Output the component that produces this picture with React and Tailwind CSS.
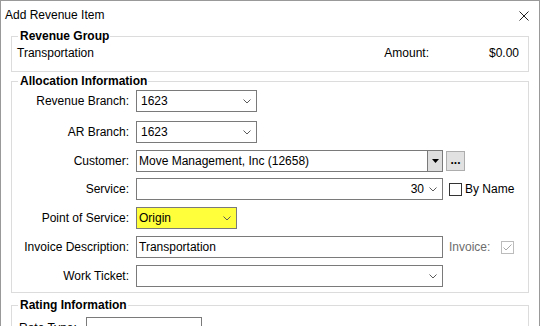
import React from 'react';

function Chevron({ className = '' }) {
  return (
    <svg width="8" height="5" viewBox="0 0 8 5" className={className}>
      <polyline points="0.5,0.5 4,4 7.5,0.5" fill="none" stroke="#5a5a5a" strokeWidth="1" />
    </svg>
  );
}

function Combo({ width, value, right, bg = 'bg-white', pl = 'pl-[4px]' }) {
  return (
    <div className={`flex h-[22px] items-center border border-[#7a7a7a] ${bg} ${pl} ${width}`}>
      <span className="truncate">{value}</span>
      {right && <span className="ml-auto">{right}</span>}
      <Chevron className="ml-auto mr-[5px] shrink-0" />
    </div>
  );
}

function Row({ label, mt = '', children }) {
  return (
    <div className={`flex h-[22px] items-center ${mt}`}>
      <div className="w-[117px] text-right">{label}</div>
      <div className="ml-[7px] flex items-center">{children}</div>
    </div>
  );
}

function Group({ title, className = '', children }) {
  return (
    <fieldset className={`border border-[#dcdcdc] ${className}`}>
      <legend className="ml-[6px] pl-[2px] pr-[1px] font-bold leading-[14px]">{title}</legend>
      {children}
    </fieldset>
  );
}

export default function App() {
  return (
    <div className="h-[326px] w-[541px] overflow-hidden bg-white font-['Liberation_Sans',Arial,sans-serif] text-[12px] leading-[14px] text-black">
      <div className="h-[340px] w-[540px] border-l border-r border-t border-[#999999]">
        {/* Title bar */}
        <div className="flex h-[28px] items-start pl-[4px] pt-[7px]">
          <span>Add Revenue Item</span>
          <svg width="10" height="10" viewBox="0 0 10 10" className="ml-auto mr-[10px] mt-[3px]">
            <path d="M0.5 0.5 L9.5 9.5 M9.5 0.5 L0.5 9.5" stroke="#222" strokeWidth="1" />
          </svg>
        </div>

        <div className="px-[10px]">
          {/* Revenue Group */}
          <Group title="Revenue Group">
            <div className="flex pb-[11px] pl-[5px] pr-[9px] pt-[3px]">
              <span>Transportation</span>
              <span className="ml-auto">Amount:</span>
              <span className="w-[90px] text-right">$0.00</span>
            </div>
          </Group>

          {/* Allocation Information */}
          <Group title="Allocation Information" className="mt-[2px]">
            <div className="pb-[5px] pt-[2px]">
              <Row label="Revenue Branch:">
                <Combo width="w-[121px]" value="1623" />
              </Row>
              <Row label="AR Branch:" mt="mt-[9px]">
                <Combo width="w-[121px]" value="1623" />
              </Row>
              <Row label="Customer:" mt="mt-[7px]">
                <div className="flex h-[22px] w-[307px] items-center border border-[#7a7a7a] bg-white pl-[2px]">
                  <span>Move Management, Inc (12658)</span>
                  <div className="ml-auto flex h-full w-[15px] items-center justify-center border-l border-[#7a7a7a] bg-[#dedede]">
                    <svg width="7" height="4" viewBox="0 0 7 4">
                      <polygon points="0,0 7,0 3.5,4" fill="#000" />
                    </svg>
                  </div>
                </div>
                <div className="ml-[3px] flex h-[20px] w-[19px] items-center justify-center border border-[#adadad] bg-[#e1e1e1] pb-[3px] font-bold leading-none">
                  ...
                </div>
              </Row>
              <Row label="Service:" mt="mt-[6px]">
                <div className="flex h-[22px] w-[307px] items-center border border-[#7a7a7a] bg-white">
                  <span className="ml-auto">30</span>
                  <Chevron className="ml-[5px] mr-[5px]" />
                </div>
                <div className="ml-[6px] h-[13px] w-[13px] border border-[#333333] bg-white" />
                <span className="ml-[3px]">By Name</span>
              </Row>
              <Row label="Point of Service:" mt="mt-[7px]">
                <Combo width="w-[101px]" value="Origin" bg="bg-[#ffff3c]" pl="pl-[2px]" />
              </Row>
              <Row label="Invoice Description:" mt="mt-[7px]">
                <div className="flex h-[22px] w-[307px] items-center border border-[#7a7a7a] bg-white pl-[2px]">
                  Transportation
                </div>
                <span className="ml-[6px] text-[#6d6d6d]">Invoice:</span>
                <div className="ml-[11px] flex h-[13px] w-[13px] items-center justify-center border border-[#bcbcbc] bg-white">
                  <svg width="9" height="7" viewBox="0 0 9 7">
                    <polyline points="0.5,3.5 3,6 8.5,0.5" fill="none" stroke="#a8a8a8" strokeWidth="1" />
                  </svg>
                </div>
              </Row>
              <Row label="Work Ticket:" mt="mt-[7px]">
                <Combo width="w-[307px]" value="" />
              </Row>
            </div>
          </Group>

          {/* Rating Information */}
          <Group title="Rating Information" className="mt-[5px]">
            <div className="flex items-center pb-[10px] pl-[7px] pt-[5px]">
              <span className="w-[67px]">Rate Type:</span>
              <Combo width="w-[116px]" value="" />
            </div>
          </Group>
        </div>
      </div>
    </div>
  );
}
